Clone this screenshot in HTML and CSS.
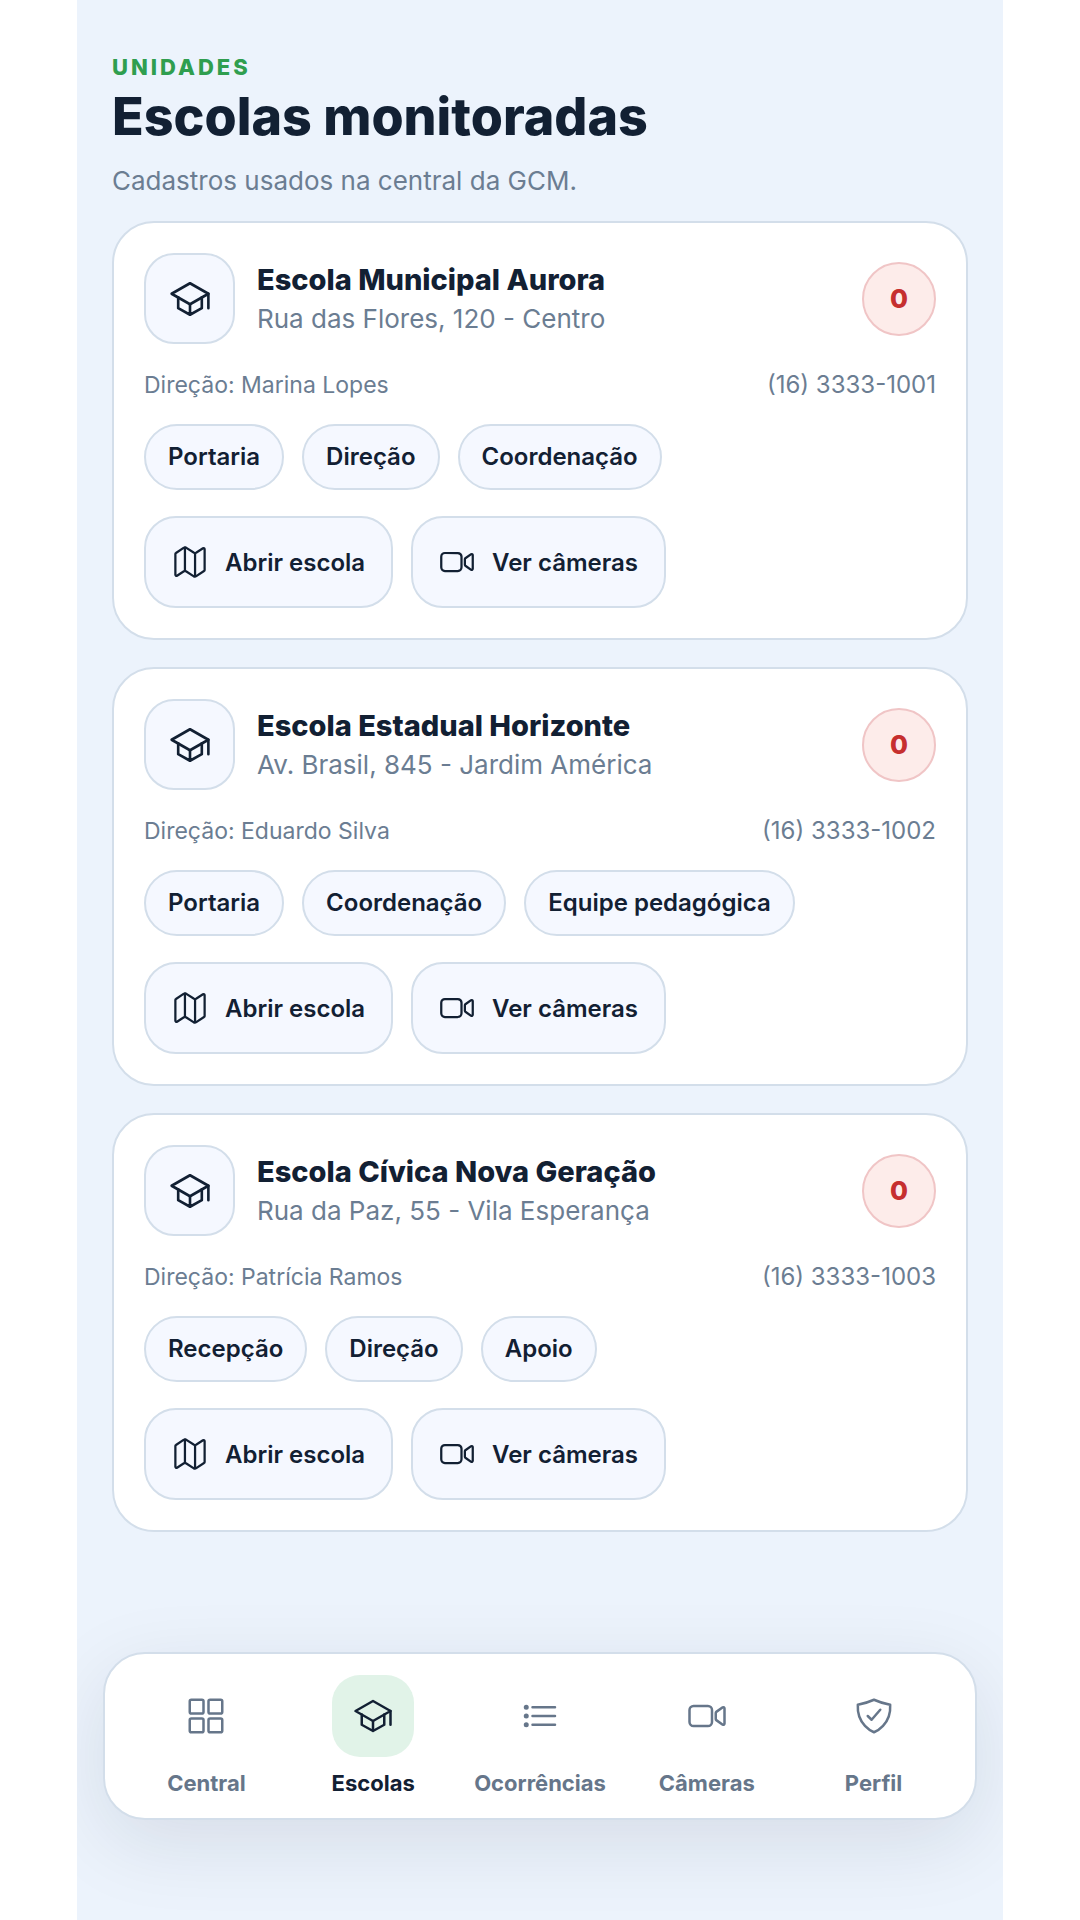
FILE: index.html
```html
<!DOCTYPE html>
<html lang="pt-BR">
<head>
  <meta charset="UTF-8">
  <meta name="viewport" content="width=device-width, initial-scale=1.0">
  <title>Escolas monitoradas</title>
  <link rel="stylesheet" href="styles.css">
</head>
<body>
  <!-- Ícones reutilizados -->
  <svg class="sprite" aria-hidden="true">
    <symbol id="icon-school" viewBox="0 0 512 512">
      <path d="M32 192L256 64l224 128-224 128L32 192z"/>
      <path d="M112 236v132l144 80 144-80V236M480 368V192M256 320v128"/>
    </symbol>
    <symbol id="icon-map" viewBox="0 0 512 512">
      <path d="M313.27 124.64L198.73 51.36a32 32 0 00-29.28.35L56.51 127.49A16 16 0 0048 141.63v295.8a16 16 0 0023.49 14.14l97.82-63.79a32 32 0 0129.5-.24l111.86 73a32 32 0 0029.27-.11l115.43-75.94a16 16 0 008.63-14.2V74.57a16 16 0 00-23.49-14.14l-98 63.86a32 32 0 01-29.24.35zM328 128v336M184 48v336"/>
    </symbol>
    <symbol id="icon-camera" viewBox="0 0 512 512">
      <path d="M374.79 308.78L457.5 367a16 16 0 0022.5-14.62V159.62A16 16 0 00457.5 145l-82.71 58.22A16 16 0 00368 216.3v79.4a16 16 0 006.79 13.08z"/>
      <path d="M268 384H84a52.15 52.15 0 01-52-52V180a52.15 52.15 0 0152-52h184.48A51.68 51.68 0 01320 179.52V332a52.15 52.15 0 01-52 52z"/>
    </symbol>
    <symbol id="icon-grid" viewBox="0 0 512 512">
      <rect x="48" y="48" width="176" height="176" rx="20"/>
      <rect x="288" y="48" width="176" height="176" rx="20"/>
      <rect x="48" y="288" width="176" height="176" rx="20"/>
      <rect x="288" y="288" width="176" height="176" rx="20"/>
    </symbol>
    <symbol id="icon-list" viewBox="0 0 512 512">
      <path d="M160 144h288M160 256h288M160 368h288"/>
      <circle cx="80" cy="144" r="16"/>
      <circle cx="80" cy="256" r="16"/>
      <circle cx="80" cy="368" r="16"/>
    </symbol>
    <symbol id="icon-shield" viewBox="0 0 512 512">
      <path d="M336 176L225.2 304 176 255.8"/>
      <path d="M463.1 112.37C373.68 96.33 336.71 84.45 256 48c-80.71 36.45-117.68 48.33-207.1 64.37C32.7 369.13 240.58 457.79 256 464c15.42-6.21 223.3-94.87 207.1-351.63z"/>
    </symbol>
  </svg>

  <div class="app">
    <!-- Cabeçalho -->
    <header class="header">
      <p class="eyebrow">UNIDADES</p>
      <h1>Escolas monitoradas</h1>
      <p class="subtitle">Cadastros usados na central da GCM.</p>
    </header>

    <!-- Lista de escolas -->
    <main class="schools">
      <article class="card">
        <div class="card-top">
          <div class="tile"><svg class="icon"><use href="#icon-school"/></svg></div>
          <div class="info">
            <h2>Escola Municipal Aurora</h2>
            <p>Rua das Flores, 120 - Centro</p>
          </div>
          <span class="badge">0</span>
        </div>
        <div class="meta">
          <span>Direção: Marina Lopes</span>
          <span class="phone">(16) 3333-1001</span>
        </div>
        <ul class="chips">
          <li>Portaria</li>
          <li>Direção</li>
          <li>Coordenação</li>
        </ul>
        <div class="actions">
          <button type="button" class="button"><svg class="icon"><use href="#icon-map"/></svg>Abrir escola</button>
          <button type="button" class="button"><svg class="icon"><use href="#icon-camera"/></svg>Ver câmeras</button>
        </div>
      </article>

      <article class="card">
        <div class="card-top">
          <div class="tile"><svg class="icon"><use href="#icon-school"/></svg></div>
          <div class="info">
            <h2>Escola Estadual Horizonte</h2>
            <p>Av. Brasil, 845 - Jardim América</p>
          </div>
          <span class="badge">0</span>
        </div>
        <div class="meta">
          <span>Direção: Eduardo Silva</span>
          <span class="phone">(16) 3333-1002</span>
        </div>
        <ul class="chips">
          <li>Portaria</li>
          <li>Coordenação</li>
          <li>Equipe pedagógica</li>
        </ul>
        <div class="actions">
          <button type="button" class="button"><svg class="icon"><use href="#icon-map"/></svg>Abrir escola</button>
          <button type="button" class="button"><svg class="icon"><use href="#icon-camera"/></svg>Ver câmeras</button>
        </div>
      </article>

      <article class="card">
        <div class="card-top">
          <div class="tile"><svg class="icon"><use href="#icon-school"/></svg></div>
          <div class="info">
            <h2>Escola Cívica Nova Geração</h2>
            <p>Rua da Paz, 55 - Vila Esperança</p>
          </div>
          <span class="badge">0</span>
        </div>
        <div class="meta">
          <span>Direção: Patrícia Ramos</span>
          <span class="phone">(16) 3333-1003</span>
        </div>
        <ul class="chips">
          <li>Recepção</li>
          <li>Direção</li>
          <li>Apoio</li>
        </ul>
        <div class="actions">
          <button type="button" class="button"><svg class="icon"><use href="#icon-map"/></svg>Abrir escola</button>
          <button type="button" class="button"><svg class="icon"><use href="#icon-camera"/></svg>Ver câmeras</button>
        </div>
      </article>
    </main>

    <!-- Navegação inferior -->
    <nav class="tabs">
      <a href="#" class="tab"><span class="tab-icon"><svg class="icon"><use href="#icon-grid"/></svg></span>Central</a>
      <a href="#" class="tab active"><span class="tab-icon"><svg class="icon"><use href="#icon-school"/></svg></span>Escolas</a>
      <a href="#" class="tab"><span class="tab-icon"><svg class="icon"><use href="#icon-list"/></svg></span>Ocorrências</a>
      <a href="#" class="tab"><span class="tab-icon"><svg class="icon"><use href="#icon-camera"/></svg></span>Câmeras</a>
      <a href="#" class="tab"><span class="tab-icon"><svg class="icon"><use href="#icon-shield"/></svg></span>Perfil</a>
    </nav>
  </div>
</body>
</html>
```

FILE: styles.css
```css
/* Estilos gerais */
* {
  margin: 0;
  padding: 0;
  box-sizing: border-box;
}

body {
  background-color: #fff;
  color: #122033;
  font-family: Inter, "Liberation Sans", sans-serif;
}

.sprite {
  display: none;
}

.icon {
  width: 40px;
  height: 40px;
  flex-shrink: 0;
  fill: none;
  stroke: currentColor;
  stroke-width: 32px;
  stroke-linecap: round;
  stroke-linejoin: round;
}

.app {
  display: flex;
  flex-direction: column;
  max-width: 926px;
  min-height: 100vh;
  margin: 0 auto;
  padding: 53px 26px 100px;
  background-color: #ecf3fc;
  overflow: hidden;
}

/* Cabeçalho */
.header {
  padding: 0 9px;
  margin-bottom: 22px;
}

.eyebrow {
  color: #2f9e4f;
  font-size: 22px;
  font-weight: 800;
  line-height: 28px;
  letter-spacing: 3px;
}

h1 {
  font-size: 52px;
  font-weight: 800;
  line-height: 64px;
  margin-top: 4px;
}

.subtitle {
  color: #6b7d92;
  font-size: 26px;
  line-height: 36px;
  margin-top: 14px;
}

/* Cartões das escolas */
.schools {
  display: flex;
  flex-direction: column;
  gap: 27px;
  padding: 0 9px;
  margin-bottom: 28px;
}

.card {
  display: flex;
  flex-direction: column;
  padding: 30px;
  background-color: #fff;
  border: 2px solid #d3deea;
  border-radius: 42px;
}

.card-top {
  display: flex;
  align-items: center;
  gap: 22px;
}

.tile {
  display: flex;
  align-items: center;
  justify-content: center;
  width: 91px;
  height: 91px;
  background-color: #f5f8ff;
  border: 2px solid #d3deea;
  border-radius: 30px;
}

.tile .icon {
  width: 42px;
  height: 42px;
}

.info {
  flex: 1;
}

h2 {
  font-size: 29px;
  font-weight: 800;
  line-height: 40px;
}

.info p {
  color: #6b7d92;
  font-size: 26px;
  line-height: 38px;
}

.badge {
  display: flex;
  align-items: center;
  justify-content: center;
  width: 74px;
  height: 74px;
  color: #c62f2f;
  background-color: #fdecea;
  border: 2px solid #f0c5c6;
  border-radius: 50%;
  font-size: 26px;
  font-weight: 800;
}

.meta {
  display: flex;
  justify-content: space-between;
  margin-top: 27px;
  color: #6b7d92;
  font-size: 23px;
  line-height: 28px;
}

.phone {
  font-size: 24px;
}

.chips {
  display: flex;
  flex-wrap: wrap;
  gap: 18px;
  margin-top: 25px;
  list-style: none;
}

.chips li {
  padding: 17px 22px;
  background-color: #f5f8ff;
  border: 2px solid #d3deea;
  border-radius: 33px;
  font-size: 23px;
  font-weight: 700;
  line-height: 28px;
}

/* Botões */
.actions {
  display: flex;
  flex-wrap: wrap;
  gap: 18px;
  margin-top: 26px;
}

.button {
  display: flex;
  align-items: center;
  gap: 17px;
  height: 92px;
  padding: 0 26px;
  color: inherit;
  background-color: #f5f8ff;
  border: 2px solid #d3deea;
  border-radius: 32px;
  font-family: inherit;
  font-size: 23px;
  font-weight: 700;
  cursor: pointer;
}

.button .icon {
  width: 36px;
  height: 36px;
}

.chips li,
.button {
  font-size: 24px;
  font-weight: 600;
}

/* Navegação inferior */
.tabs {
  display: flex;
  margin-top: auto;
  padding: 21px 18px;
  background-color: #fff;
  border: 2px solid #d3deea;
  border-radius: 42px;
  box-shadow: 0 22px 80px rgba(15, 31, 51, 0.1);
}

.tab {
  display: flex;
  flex: 1;
  flex-direction: column;
  align-items: center;
  gap: 12px;
  color: #66768a;
  font-size: 22px;
  font-weight: 700;
  line-height: 28px;
  text-decoration: none;
}

.tab-icon {
  display: flex;
  align-items: center;
  justify-content: center;
  width: 82px;
  height: 82px;
  border-radius: 28px;
}

.tab.active {
  color: #122033;
}

.tab.active .tab-icon {
  background-color: #e1f3e8;
}
```
